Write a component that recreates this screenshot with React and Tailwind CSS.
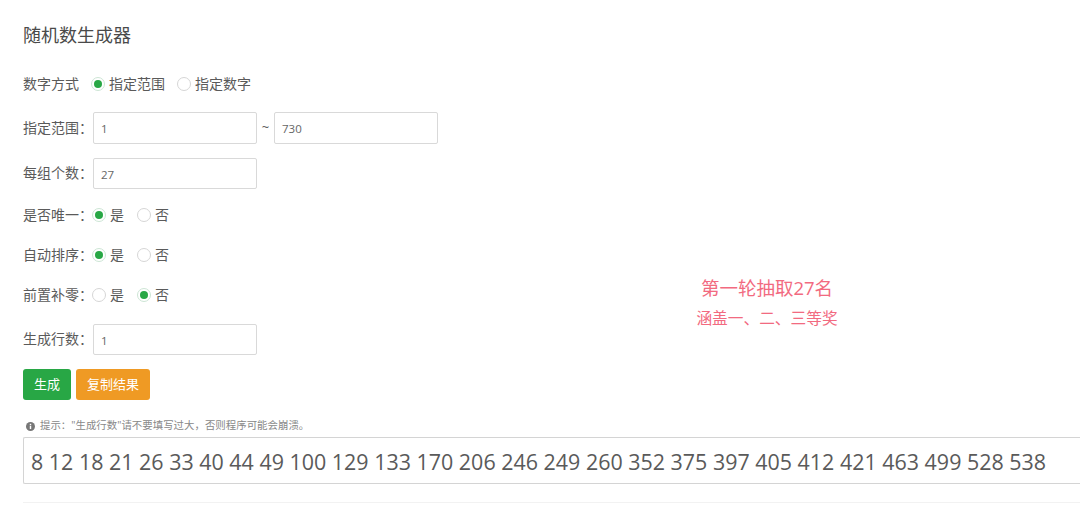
import React from 'react';

const COLON = '\uFF1A';
const COMMA = '\uFF0C';

function Radio({ checked, label, className = '' }) {
  return (
    <label className={`flex items-center gap-[4px] ${className}`}>
      <span
        className={`flex h-[14px] w-[14px] items-center justify-center rounded-full border ${
          checked ? 'border-[#cde5d5]' : 'border-[#d6d6d6]'
        }`}
      >
        {checked && <span className="h-[8px] w-[8px] rounded-full bg-[#28a745]" />}
      </span>
      <span className="pb-[2px]">{label}</span>
    </label>
  );
}

function TextBox({ value, tall }) {
  return (
    <div
      className={`flex w-[164px] items-center rounded-[2px] border border-[#d9d9d9] bg-white pl-[7px] pt-[2px] text-[11.5px] text-[#666] ${
        tall ? 'h-[32px]' : 'h-[31px]'
      }`}
    >
      {value}
    </div>
  );
}

function Row({ label, className = '', children }) {
  return (
    <div className={`flex items-center ${className}`}>
      <span className="w-[70px] shrink-0 pb-[2px]">{label}</span>
      {children}
    </div>
  );
}

function YesNo({ yes }) {
  return (
    <div className="-ml-[1px] flex">
      <Radio checked={yes} label="是" className="w-[45px]" />
      <Radio checked={!yes} label="否" />
    </div>
  );
}

export default function App() {
  return (
    <div
      className="relative h-[513px] w-[1080px] overflow-hidden bg-white pl-[23px] text-[14px] text-[#5a5a5a]"
      style={{ fontFamily: '"Open Sans", "Noto Sans CJK SC", sans-serif' }}
    >
      <h1 className="h-[72px] pt-[23px] text-[18px] leading-[24px] text-[#4a4a4a]">随机数生成器</h1>

      <Row label="数字方式" className="h-[24px]">
        <div className="-ml-[2px] flex">
          <Radio checked label="指定范围" className="w-[86px]" />
          <Radio label="指定数字" />
        </div>
      </Row>

      <Row label={`指定范围${COLON}`} className="mt-[16px]">
        <TextBox value="1" tall />
        <span className="w-[17px] text-center text-[13px]">~</span>
        <TextBox value="730" tall />
      </Row>

      <Row label={`每组个数${COLON}`} className="mt-[14px]">
        <TextBox value="27" />
      </Row>

      <Row label={`是否唯一${COLON}`} className="mt-[14px] h-[24px]">
        <YesNo yes />
      </Row>
      <Row label={`自动排序${COLON}`} className="mt-[16px] h-[24px]">
        <YesNo yes />
      </Row>
      <Row label={`前置补零${COLON}`} className="mt-[16px] h-[24px]">
        <YesNo yes={false} />
      </Row>

      <Row label={`生成行数${COLON}`} className="mt-[17px]">
        <TextBox value="1" />
      </Row>

      <div className="mt-[14px] flex gap-[5px] text-[13px] text-white">
        <button type="button" className="h-[31px] w-[48px] rounded-[3px] bg-[#28a745]">
          生成
        </button>
        <button type="button" className="h-[31px] w-[74px] rounded-[3px] bg-[#ef9a24]">
          复制结果
        </button>
      </div>

      <p className="mt-[18px] flex h-[14px] items-center pl-[3px] pt-[2px] text-[10.45px] whitespace-nowrap text-[#888]">
        <svg viewBox="0 0 10 10" className="mr-[5px] h-[9px] w-[9px]">
          <circle cx="5" cy="5" r="5" fill="#777" />
          <rect x="4.2" y="4.2" width="1.6" height="3.6" fill="#fff" />
          <rect x="4.2" y="2" width="1.6" height="1.5" fill="#fff" />
        </svg>
        {`提示${COLON}"生成行数"请不要填写过大${COMMA}否则程序可能会崩溃。`}
      </p>

      <div className="mt-[5px] flex h-[47px] items-center rounded-l-[2px] border border-r-0 border-[#d4d4d4] pl-[7px] pt-[3px] text-[21.45px] whitespace-nowrap text-[#5a5a5a]">
        8 12 18 21 26 33 40 44 49 100 129 133 170 206 246 249 260 352 375 397 405 412 421 463 499 528 538
      </div>

      <div className="mt-[18px] border-t border-[#f2f2f2]" />

      {/* annotation laid over the page */}
      <div className="absolute top-[275px] left-[667px] w-[200px] text-center text-[#f26a80]">
        <p className="text-[18.5px] leading-[26px]">第一轮抽取27名</p>
        <p className="mt-[5px] text-[15.7px] leading-[24px]">涵盖一、二、三等奖</p>
      </div>
    </div>
  );
}
